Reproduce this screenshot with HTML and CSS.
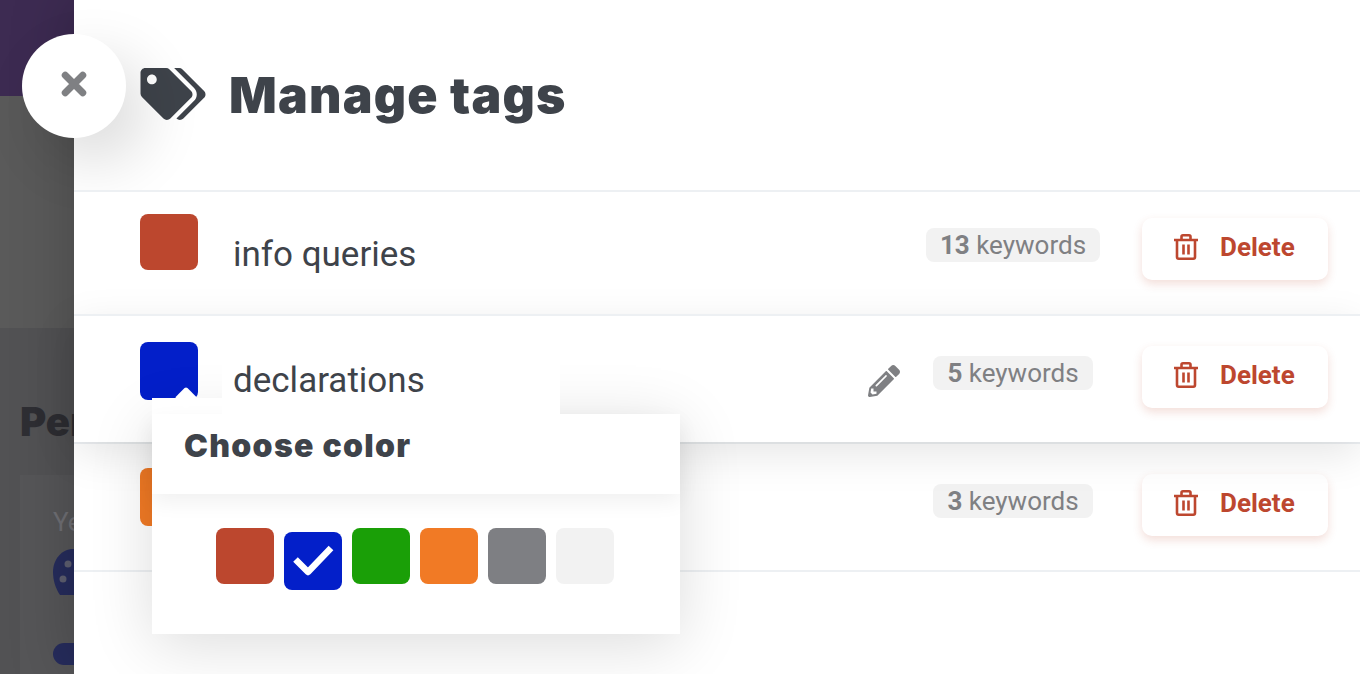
FILE: index.html
```html
<!DOCTYPE html>
<html lang="en">
<head>
<meta charset="utf-8">
<title>Manage tags</title>
<link rel="stylesheet" href="styles.css">
</head>
<body>
<div class="page">
  <div class="page-head"></div>
  <div class="page-band"></div>
  <div class="page-body">
    <h2 class="page-title">Per</h2>
    <div class="page-card">
      <p class="page-label">Ye</p>
      <svg class="page-palette" viewBox="0 0 40 46"><path class="page-palette-fill" d="M20 0C9 0 0 10 0 23c0 9 3 17 7 23h33V0z"/><circle class="page-palette-dot" cx="15" cy="15" r="3.5"/><circle class="page-palette-dot" cx="10" cy="30" r="3.5"/></svg>
      <div class="page-pill"></div>
    </div>
  </div>
</div>

<aside class="panel">
  <button class="close" aria-label="Close">
    <svg viewBox="0 0 24 24" width="28" height="28"><path d="M4.500 4.500l15 15M19.500 4.500l-15 15"/></svg>
  </button>

  <header class="panel-head">
    <svg class="tags-icon" viewBox="0 0 640 512"><path d="M497.941 225.941L286.059 14.059A48 48 0 0 0 252.118 0H48C21.49 0 0 21.49 0 48v204.118a48 48 0 0 0 14.059 33.941l211.882 211.882c18.744 18.745 49.136 18.746 67.882 0l204.118-204.118c18.745-18.745 18.745-49.137 0-67.882zM112 160c-26.51 0-48-21.49-48-48s21.49-48 48-48 48 21.49 48 48-21.49 48-48 48zm513.941 133.823L421.823 497.941c-18.745 18.745-49.137 18.745-67.882 0l-.36-.36L527.64 323.522c16.999-16.999 26.36-39.6 26.36-63.64s-9.362-46.641-26.36-63.64L331.397 0h48.721a48 48 0 0 1 33.941 14.059l211.882 211.882c18.745 18.745 18.745 49.137 0 67.882z"/></svg>
    <h1 class="panel-title">Manage tags</h1>
  </header>

  <section class="row row-first">
    <div class="swatch red"></div>
    <div class="name">info queries</div>
    <div class="count"><span class="pill"><b>13</b> keywords</span></div>
    <button class="delete">
      <svg class="trash" viewBox="0 0 24 26"><path d="M0 6h24M7.500 6V2.800Q7.500 1.300 9 1.300h6q1.500 0 1.500 1.500V6M3 6v17q0 1.700 1.700 1.700h14.600q1.700 0 1.700-1.700V6M9.500 10.500v10M14.500 10.500v10"/></svg>
      <span>Delete</span>
    </button>
  </section>

  <section class="row row-active">
    <div class="swatch-wrap">
      <div class="swatch blue"></div>
      <div class="popover">
        <h3 class="popover-title">Choose color</h3>
        <div class="palette">
          <div class="swatch red"></div>
          <div class="swatch blue selected">
            <svg viewBox="0 0 58 58" width="58" height="58"><path d="M11.500 27.500L24 40 47 16"/></svg>
          </div>
          <div class="swatch green"></div>
          <div class="swatch orange"></div>
          <div class="swatch grey"></div>
          <div class="swatch light"></div>
        </div>
      </div>
    </div>
    <div class="name name-edit">declarations</div>
    <svg class="pencil" viewBox="0 0 512 512"><path d="M497.900 142.100l-46.100 46.100c-4.700 4.700-12.300 4.700-17 0l-111-111c-4.700-4.700-4.700-12.300 0-17l46.100-46.100c18.700-18.700 49.100-18.700 67.900 0l60.100 60.100c18.800 18.700 18.800 49.100 0 67.900zM284.200 99.800L21.600 362.400.4 483.900c-2.900 16.400 11.400 30.600 27.800 27.800l121.500-21.300 262.600-262.600c4.700-4.700 4.700-12.300 0-17l-111-111c-4.800-4.700-12.400-4.700-17.100 0zM124.100 339.900c-5.500-5.500-5.500-14.300 0-19.800l154-154c5.500-5.500 14.300-5.500 19.800 0s5.500 14.300 0 19.800l-154 154c-5.500 5.500-14.300 5.500-19.800 0zM88 424h48v36.300l-64.500 11.300-31.100-31.100L51.700 376H88v48z"/></svg>
    <div class="count"><span class="pill"><b>5</b> keywords</span></div>
    <button class="delete">
      <svg class="trash" viewBox="0 0 24 26"><path d="M0 6h24M7.500 6V2.800Q7.500 1.300 9 1.300h6q1.500 0 1.500 1.500V6M3 6v17q0 1.700 1.700 1.700h14.600q1.700 0 1.700-1.700V6M9.500 10.500v10M14.500 10.500v10"/></svg>
      <span>Delete</span>
    </button>
  </section>

  <section class="row row-last">
    <div class="swatch orange tall"></div>
    <div class="name"></div>
    <div class="count"><span class="pill"><b>3</b> keywords</span></div>
    <button class="delete">
      <svg class="trash" viewBox="0 0 24 26"><path d="M0 6h24M7.500 6V2.800Q7.500 1.300 9 1.300h6q1.500 0 1.500 1.500V6M3 6v17q0 1.700 1.700 1.700h14.600q1.700 0 1.700-1.700V6M9.500 10.500v10M14.500 10.500v10"/></svg>
      <span>Delete</span>
    </button>
  </section>
</aside>
</body>
</html>
```
FILE: styles.css
```css
* { box-sizing: border-box; }
html, body { margin: 0; height: 100%; overflow: hidden; }
body { font-family: Roboto, "Liberation Sans", sans-serif; background: #525254; }

/* dimmed page behind the drawer */
.page { height: 100vh; overflow: hidden; display: flex; flex-direction: column; }
.page-head { flex: none; height: 96px; background: #3d2b52; }
.page-band { flex: none; height: 232px; background: #5a5a5a; }
.page-body { flex: 1; min-height: 0; background: #525254; padding: 70px 0 0 20px; }
.page-title { margin: 0; font: 900 40px/48px Inter, sans-serif; color: #2e2e33; }
.page-card { margin-top: 29px; height: 220px; width: 600px; background: #565658; padding: 29px 0 0 33px; }
.page-label { margin: 0; font: 400 26px/36px Roboto, sans-serif; color: #6f6f74; }
.page-palette { display: block; width: 40px; height: 46px; margin-top: 9px; }
.page-palette-fill { fill: #262c5c; }
.page-palette-dot { fill: #5e5f70; }
.page-pill { margin-top: 48px; width: 60px; height: 22px; border-radius: 11px; background: #262c5c; }

/* drawer */
.panel { position: absolute; left: 74px; top: 0; right: 0; bottom: 0; background: #fff; box-shadow: 0 0 60px rgba(0, 0, 0, .22); }
.close { position: absolute; left: -52px; top: 34px; width: 104px; height: 104px; border: 0; padding: 0 0 4px; border-radius: 50%; background: #fff; box-shadow: 20px 24px 60px rgba(0, 0, 0, .14); display: flex; align-items: center; justify-content: center; }
.close path { fill: none; stroke: #7f8083; stroke-width: 6px; stroke-linecap: round; }

.panel-head { height: 190px; padding: 68px 0 0 66px; display: flex; align-items: flex-start; }
.tags-icon { width: 66px; height: 52px; fill: #3e434a; flex: none; }
.panel-title { margin: -3px 0 0 23px; font: 900 50px/60px Inter, sans-serif; letter-spacing: 1.2px; color: #3e434a; }

.row { position: relative; display: flex; align-items: flex-start; height: 128px; padding: 26px 32px 0 66px; background: #fff; border-top: 2px solid #edf0f3; }
.row-first { height: 124px; padding-top: 22px; }
.row-active { z-index: 2; box-shadow: 0 12px 40px rgba(0, 0, 0, .1); }
.row-last { padding-top: 24px; border-bottom: 2px solid #edf0f3; height: 130px; }

.swatch { width: 58px; height: 56px; border-radius: 8px; flex: none; }
.swatch.tall { height: 58px; }
.red { background: #bc472e; }
.blue { background: #031fc9; }
.green { background: #1a9f07; }
.orange { background: #f17a25; }
.grey { background: #7e7f83; }
.light { background: #f2f2f2; }
.swatch-wrap { position: relative; width: 58px; height: 58px; flex: none; }
.swatch-wrap > .swatch { height: 58px; }

.name { width: 338px; height: 62px; margin: 10px 0 0 24px; padding-left: 11px; font-size: 35px; line-height: 58px; color: #3e434a; background: #fff; position: relative; flex: none; }
.row-first .name, .row-last .name { margin-top: 12px; margin-right: 320px; }
.name-edit { z-index: 4; margin-right: 308px; }

.pencil { width: 32px; height: 32px; fill: #7f8083; flex: none; margin: 23px 18px 0 0; }
.count { width: 190px; margin: 14px 34px 0 auto; text-align: center; flex: none; }
.row-last .count { margin-top: 16px; }
.pill { display: inline-block; height: 34px; line-height: 34px; padding: 0 14px; border-radius: 8px; background: #f2f2f2; color: #7f8083; font-size: 26px; }
.pill b { font-weight: 700; }

.delete { flex: none; margin-top: 4px; width: 186px; height: 62px; padding: 0 0 4px 32px; border: 0; border-radius: 10px; background: #fff; color: #bd472f; font: 700 26px/1 Roboto, sans-serif; display: flex; align-items: center; box-shadow: 0 4px 10px rgba(189, 71, 47, .18); }
.row-last .delete { margin-top: 6px; }
.trash { width: 24px; height: 26px; margin-right: 22px; fill: none; stroke: #bd472f; stroke-width: 2.600; }

/* colour chooser */
.popover { position: absolute; left: 12px; top: 72px; width: 528px; height: 220px; background: #fff; z-index: 3; box-shadow: 0 10px 60px rgba(0, 0, 0, .14); }
.popover::before { content: ""; position: absolute; left: 0; top: -16px; width: 70px; height: 16px; background: #fff; }
.popover::after { content: ""; position: absolute; left: 26px; top: -24px; width: 16px; height: 16px; background: #fff; border-radius: 2px; transform: rotate(45deg); }
.popover-title { margin: 0; height: 80px; padding-left: 32px; font: 900 32px/64px Inter, sans-serif; letter-spacing: 1.3px; color: #3e434a; position: relative; box-shadow: 0 8px 20px rgba(0, 0, 0, .06); }
.palette { display: flex; align-items: flex-start; gap: 10px; padding: 34px 0 0 64px; }
.selected { height: 58px; margin-top: 4px; }
.selected svg { display: block; }
.selected path { fill: none; stroke: #fff; stroke-width: 6.500px; stroke-linejoin: round; }
```
